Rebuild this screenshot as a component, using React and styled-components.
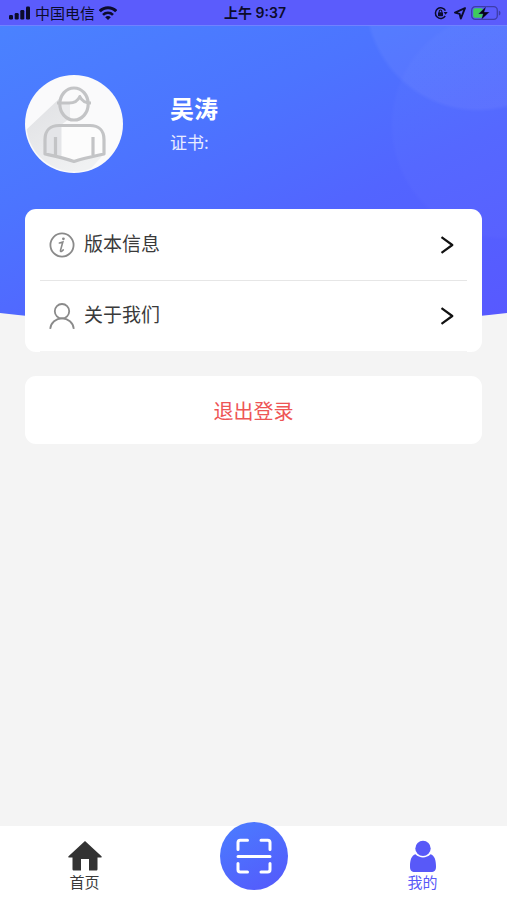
import React from "react";
import styled, { createGlobalStyle, css } from "styled-components";

const colors = {
  primary: "#5859f8",
  blue: "#4a7dff",
  page: "#f4f4f4",
  text: "#3a3a3a",
  muted: "#8a8a8a",
  line: "#e6e6e6",
  danger: "#ee5555",
  status: "#0b0b2b",
};

const flex = (direction, justify, align) => css`
  display: flex;
  flex-direction: ${direction};
  justify-content: ${justify};
  align-items: ${align};
`;

const SignalIcon = () => (
  <svg width="22" height="14" viewBox="0 0 22 14" fill={colors.status} aria-hidden="true">
    <rect x="0" y="9" width="4" height="4.500" rx="1.2" />
    <rect x="5.700" y="7" width="4" height="6.500" rx="1.2" />
    <rect x="11.3" y="4" width="4" height="9.500" rx="1.2" />
    <rect x="17" y="0.5" width="4" height="13" rx="1.2" />
  </svg>
);

const WifiIcon = () => (
  <svg width="18" height="14" viewBox="0 0 18 14" fill="none" stroke={colors.status} aria-hidden="true">
    <path d="M.8 5.2C5.2.5 12.8.5 17.2 5.2" strokeWidth="3" />
    <path d="M4 8.800c2.800-2.800 7.200-2.800 10 0" strokeWidth="2.6" />
    <path d="M9 14 6.200 11.200c1.600-1.500 4-1.500 5.600 0z" fill={colors.status} stroke="none" />
  </svg>
);

const LockIcon = () => (
  <svg width="14" height="14" viewBox="0 0 14 14" fill="none" stroke={colors.status} aria-hidden="true">
    <path d="M11.400 4.600A5.300 5.300 0 1 0 11.200 10" strokeWidth="1.500" />
    <path d="M9.600 6h4l-2 2.800z" fill={colors.status} stroke="none" />
    <rect x="4" y="6.200" width="5" height="4" rx="0.6" fill={colors.status} stroke="none" />
    <path d="M5.200 6.600V5.300a1.300 1.300 0 0 1 2.600 0v1.300" strokeWidth="1.100" />
  </svg>
);

const LocationIcon = () => (
  <svg width="13" height="13" viewBox="0 0 13 13" fill="none" stroke={colors.status} aria-hidden="true">
    <path d="M12 1.200 2 5.600l4.600 1.200L7.800 11.600z" strokeWidth="1.900" strokeLinejoin="round" />
  </svg>
);

const BatteryIcon = () => (
  <svg width="30" height="14" viewBox="0 0 30 14" aria-hidden="true">
    <rect x="0.7" y="0.7" width="25.6" height="12.6" rx="3.6" fill="none" stroke="#3d3da8" strokeWidth="1.300" />
    <path d="M27.800 4.400c2.200.8 2.200 4.400 0 5.200z" fill="#3d3da8" />
    <rect x="2.2" y="2.2" width="9.800" height="9.6" rx="1.800" fill="#3ecb5c" />
    <path d="M15 .5 7.400 7.900h4.600l-1.700 5.800 8.200-7.700h-5.200z" fill="#050515" stroke="#5b5bfb" strokeWidth="0.3" />
  </svg>
);

const AvatarIcon = () => (
  <svg width="100%" height="100%" viewBox="0 0 98 98" fill="none" aria-hidden="true">
    <defs>
      <clipPath id="avatar-clip">
        <circle cx="49" cy="49" r="47.5" />
      </clipPath>
      <linearGradient id="avatar-shade" x1="0" y1="0" x2="0.6" y2="1">
        <stop offset="0" stopColor="#dfe0e3" />
        <stop offset="1" stopColor="#f0f1f2" />
      </linearGradient>
    </defs>
    <circle cx="49" cy="49" r="49" fill="#fafafb" />
    <path d="M36 22 0 56v42h62L79 79H20V62l24-18z" fill="url(#avatar-shade)" clipPath="url(#avatar-clip)" />
    <ellipse cx="49" cy="29" rx="14" ry="16" fill="#fafafb" />
    <path d="M35 28h10v15.500c-6-2-10-8-10-15.500z" fill="#ebecee" />
    <path d="M20 79V64.500c0-9 5.500-14 14-14h31c8.500 0 14 5 14 14V79l-30 7.500z" fill="#fcfcfc" />
    <path d="M20 79V64.500c0-9 5.500-14 14-14h2.500V83z" fill="#e4e5e8" />
    <g stroke="#c3c4c6" strokeWidth="3.200" strokeLinejoin="round">
      <ellipse cx="49" cy="29" rx="14.200" ry="16" />
      <path d="M32 28h12c5 0 9-2.200 10.800-6.500C56.500 25.500 60 28 66 28" strokeWidth="3" />
      <path d="M20 79V64.500c0-9 5.500-14 14-14h31c8.500 0 14 5 14 14V79c-11 2.400-20 4-30 7.500C39 83 31 81.400 20 79z" />
      <path d="M30.500 62v18M68 62v18" />
    </g>
  </svg>
);

const InfoIcon = () => (
  <svg width="26" height="26" viewBox="0 0 26 26" fill="none" stroke={colors.muted} aria-hidden="true">
    <circle cx="13" cy="13" r="11.600" strokeWidth="1.800" />
    <circle cx="14.400" cy="6.800" r="1.400" fill={colors.muted} stroke="none" />
    <path d="M10.400 11c1.200-.2 2.200-.5 3.400-1l-2.300 8.400c-.3 1.200.5 1.400 1.400.7l1.400-1.200" strokeWidth="1.600" strokeLinecap="round" />
  </svg>
);

const UserIcon = () => (
  <svg width="26" height="26" viewBox="0 0 26 26" fill="none" stroke={colors.muted} strokeWidth="1.800" aria-hidden="true">
    <circle cx="13" cy="8.200" r="7.200" />
    <path d="M1.200 25.800C1.800 19.500 7 15.400 13 15.400S24.200 19.500 24.800 25.800" />
  </svg>
);

const ChevronIcon = () => (
  <svg width="14" height="18" viewBox="0 0 14 18" fill="none" stroke="#111111" strokeWidth="2.200" aria-hidden="true">
    <path d="M1.500 1.200 12.300 9 1.500 16.800" strokeLinejoin="round" />
  </svg>
);

const HomeIcon = () => (
  <svg width="34" height="32" viewBox="0 0 34 32" fill="#333333" aria-hidden="true">
    <path d="M17 1 .5 16.200c-.5.600-.2 1.300.6 1.300H4.500V29c0 1 .5 1.500 1.500 1.500h7V19h8v11.500h7c1 0 1.500-.5 1.500-1.500V17.500h3.400c.8 0 1.100-.7.600-1.300z" />
  </svg>
);

const PersonIcon = () => (
  <svg width="28" height="32" viewBox="0 0 28 32" fill={colors.primary} aria-hidden="true">
    <circle cx="14" cy="8.400" r="7.700" />
    <path d="M6.500 14.300C2.500 15.500 1 20 1 26.500c0 4 1.500 5.500 5 5.500h16c3.500 0 5-1.500 5-5.500 0-6.500-1.500-11-5.500-12.200-4 4.200-11 4.200-15 0z" />
  </svg>
);

const ScanIcon = () => (
  <svg
    width="36"
    height="36"
    viewBox="0 0 36 36"
    fill="none"
    stroke="#ffffff"
    strokeWidth="3"
    strokeLinecap="round"
    strokeLinejoin="round"
    aria-hidden="true"
  >
    <path d="M2 11.500V4.500c0-1.500.8-2.300 2.300-2.300h7.200M25 2.200h6.700c1.500 0 2.300.8 2.300 2.300v7M34 25.500v6.200c0 1.500-.8 2.300-2.300 2.300H25M11.500 34H4.300C2.800 34 2 33.200 2 31.700v-6.200M2 18.500h32" />
  </svg>
);

const MenuItem = (props) => {
  return (
    <MenuRow href={props.href}>
      {props.icon}
      <MenuLabel>{props.label}</MenuLabel>
      <ChevronIcon />
    </MenuRow>
  );
};

const App = () => {
  return (
    <Page>
      <GlobalStyle />
      <StatusBar>
        <StatusGroup>
          <SignalIcon />
          <Carrier>中国电信</Carrier>
          <WifiIcon />
        </StatusGroup>
        <Clock>上午 9:37</Clock>
        <StatusGroup $end>
          <LockIcon />
          <LocationIcon />
          <BatteryIcon />
        </StatusGroup>
      </StatusBar>
      <Hero>
        <Avatar>
          <AvatarIcon />
        </Avatar>
        <div>
          <Name>吴涛</Name>
          <Certificate>证书:</Certificate>
        </div>
      </Hero>
      <Content>
        <Menu>
          <MenuItem href="#version" icon={<InfoIcon />} label="版本信息" />
          <MenuItem href="#about" icon={<UserIcon />} label="关于我们" />
        </Menu>
        <LogoutButton type="button">退出登录</LogoutButton>
      </Content>
      <TabBar>
        <Tab href="#home">
          <HomeIcon />
          首页
        </Tab>
        <ScanButton type="button" aria-label="扫一扫">
          <ScanIcon />
        </ScanButton>
        <Tab href="#mine" $active>
          <PersonIcon />
          我的
        </Tab>
      </TabBar>
    </Page>
  );
};

export default App;

const GlobalStyle = createGlobalStyle`
  * {
    box-sizing: border-box;
  }

  body {
    margin: 0;
    background-color: ${colors.page};
    color: ${colors.text};
    font-family: "Noto Sans CJK SC", sans-serif;
  }

  a {
    color: inherit;
    text-decoration: none;
  }

  button {
    border: 0;
    padding: 0;
    font-family: inherit;
    cursor: pointer;
  }

  svg {
    display: block;
    flex-shrink: 0;
  }
`;

const Page = styled.div`
  ${flex("column", "flex-start", "stretch")};
  min-height: 100vh;
`;

const StatusBar = styled.header`
  display: grid;
  grid-template-columns: 1fr auto 1fr;
  align-items: center;
  height: 26px;
  padding: 1px 6px 0 9px;
  border-bottom: 1px solid #7082ff;
  background-color: #5b5cfc;
  color: ${colors.status};
  line-height: 24px;
`;

const StatusGroup = styled.div`
  ${(props) => flex("row", props.$end ? "flex-end" : "flex-start", "center")};
  gap: ${(props) => (props.$end ? "5px" : "4px")};
`;

const Carrier = styled.span`
  font-size: 15px;
`;

const Clock = styled.time`
  font-family: Inter, "Noto Sans CJK SC", sans-serif;
  font-size: 14px;
  font-weight: 600;
`;

const Hero = styled.section`
  ${flex("row", "flex-start", "flex-start")};
  gap: 47px;
  padding: 49px 25px 155px;
  background-image: radial-gradient(
      circle at calc(100% - 29px) -28px,
      rgba(255, 255, 255, 0.05) 110px,
      transparent 114px
    ),
    radial-gradient(
      circle at calc(100% - 2px) 99px,
      rgba(255, 255, 255, 0.02) 111px,
      transparent 115px
    ),
    linear-gradient(155deg, #4a82ff 0%, #4c74ff 35%, #5265ff 62%, #5858ff 100%);
  clip-path: ellipse(160% 100% at 50% 0);
  color: #ffffff;
`;

const Avatar = styled.div`
  flex-shrink: 0;
  width: 98px;
  height: 98px;
`;

const Name = styled.h1`
  margin: 15px 0 0;
  font-size: 24px;
  font-weight: 700;
  line-height: 36px;
`;

const Certificate = styled.p`
  margin: 0;
  color: #e9ecff;
  font-size: 17px;
  line-height: 32px;
`;

const Content = styled.main`
  ${flex("column", "flex-start", "stretch")};
  position: relative;
  flex: 1;
  gap: 24px;
  margin-top: -119px;
  padding: 0 25px 24px;
`;

const Menu = styled.nav`
  padding: 0 15px;
  border-radius: 11px;
  background-color: #ffffff;
`;

const MenuRow = styled.a`
  ${flex("row", "flex-start", "center")};
  gap: 9px;
  height: 72px;
  padding: 0 13px 0 9px;
  border-bottom: 1px solid ${colors.line};

  &:last-child {
    height: 71px;
    border-bottom-color: #f4f4f4;
  }
`;

const MenuLabel = styled.span`
  flex: 1;
  padding-bottom: 4px;
  font-size: 19px;
  line-height: 28px;
`;

const LogoutButton = styled.button`
  height: 68px;
  border-radius: 11px;
  background-color: #ffffff;
  color: ${colors.danger};
  font-size: 20px;
`;

const TabBar = styled.nav`
  display: grid;
  grid-template-columns: repeat(3, 1fr);
  height: 74px;
  background-color: #ffffff;
`;

const Tab = styled.a`
  ${flex("column", "flex-start", "center")};
  padding-top: 14px;
  color: ${(props) => (props.$active ? colors.primary : colors.text)};
  font-size: 15px;
  line-height: 20px;
`;

const ScanButton = styled.button`
  ${flex("row", "center", "center")};
  justify-self: center;
  width: 68px;
  height: 68px;
  margin-top: -4px;
  border-radius: 50%;
  background-image: linear-gradient(150deg, ${colors.blue}, #5558fb);
`;
